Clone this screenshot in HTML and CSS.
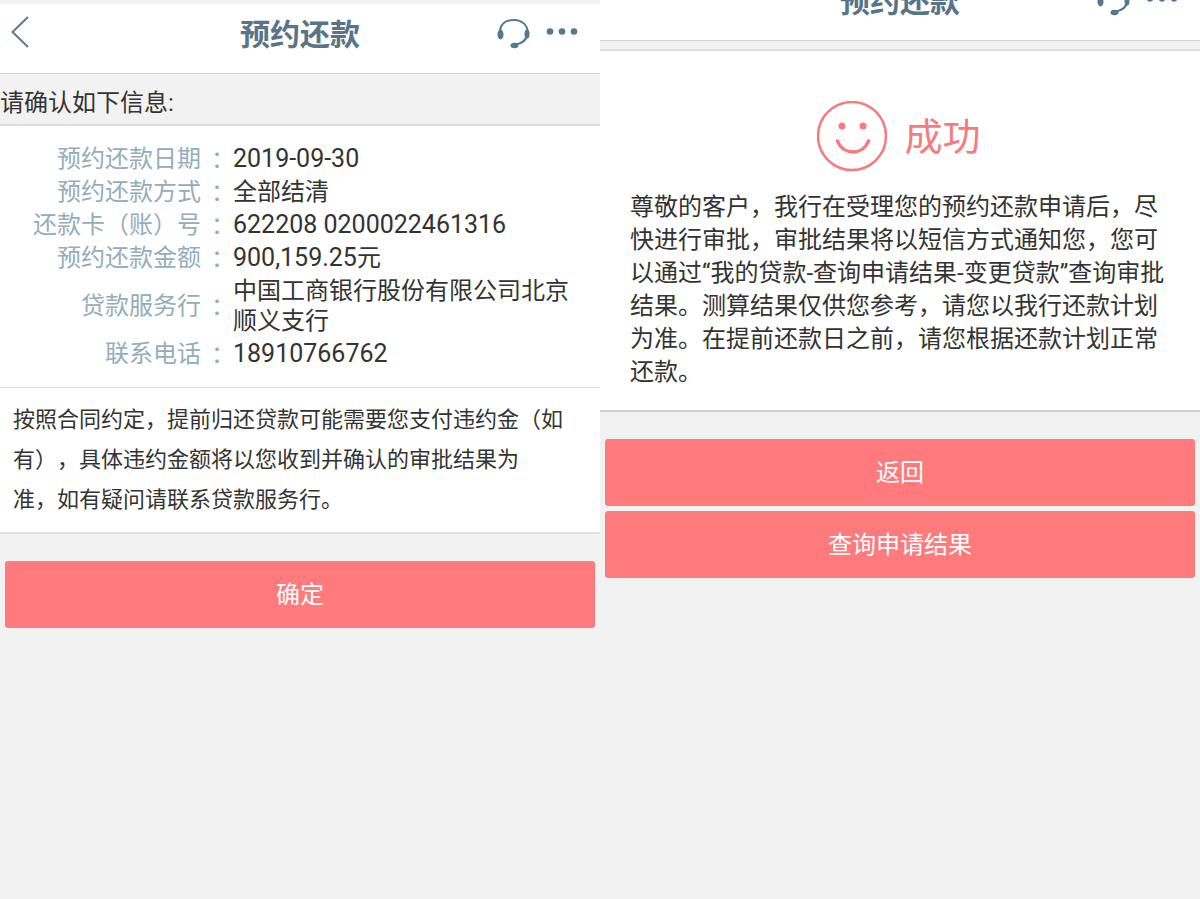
FILE: index.html
```html
<!DOCTYPE html>
<html lang="zh-CN">
<head>
<meta charset="utf-8">
<meta name="viewport" content="width=device-width, initial-scale=1">
<title>预约还款</title>
<link rel="stylesheet" href="styles.css">
</head>
<body>
<div class="screens">
  <section class="screen">
    <header class="bar">
      <button class="icon-btn" type="button" aria-label="后退">
        <svg width="40" height="40" viewBox="0 0 40 40"><path d="M28 2 12.500 17 28 32" fill="none" stroke="#5b7b8e" stroke-width="2"/></svg>
      </button>
      <h1 class="title">预约还款</h1>
      <div class="actions">
        <button class="icon-btn" type="button" aria-label="客服">
          <svg width="36" height="34" viewBox="0 0 36 34"><path d="M4.500 16C2.500 7 9 2 17.500 2s15 5 14 14c-1 6-5 9.500-12 10.500" fill="none" stroke="#55788d" stroke-width="2"/><ellipse cx="4.500" cy="16.500" rx="3" ry="5" fill="#55788d"/><ellipse cx="31" cy="16" rx="2.500" ry="4.500" fill="#55788d"/><ellipse cx="18.500" cy="27.500" rx="4" ry="2.700" fill="#55788d"/></svg>
        </button>
        <button class="icon-btn" type="button" aria-label="更多">
          <svg width="34" height="34" viewBox="0 0 34 34" fill="#55788d"><circle cx="4" cy="13.500" r="3.300"/><circle cx="16" cy="13.500" r="3.300"/><circle cx="28" cy="13.500" r="3.300"/></svg>
        </button>
      </div>
    </header>
    <p class="prompt">请确认如下信息:</p>
    <dl class="details">
      <dt>预约还款日期</dt><dd class="colon">：</dd><dd class="num">2019-09-30</dd>
      <dt>预约还款方式</dt><dd class="colon">：</dd><dd>全部结清</dd>
      <dt>还款卡（账）号</dt><dd class="colon">：</dd><dd class="num">622208 0200022461316</dd>
      <dt>预约还款金额</dt><dd class="colon">：</dd><dd><span class="num">900,159.25</span>元</dd>
      <dt>贷款服务行</dt><dd class="colon">：</dd><dd>中国工商银行股份有限公司北京顺义支行</dd>
      <dt>联系电话</dt><dd class="colon">：</dd><dd class="num">18910766762</dd>
    </dl>
    <p class="notice">按照合同约定，提前归还贷款可能需要您支付违约金（如<br>有），具体违约金额将以您收到并确认的审批结果为<br>准，如有疑问请联系贷款服务行。</p>
    <div class="buttons"><button class="primary" type="button">确定</button></div>
  </section>

  <section class="screen">
    <header class="bar scrolled">
      <span></span>
      <h1 class="title">预约还款</h1>
      <div class="actions">
        <button class="icon-btn" type="button" aria-label="客服">
          <svg width="36" height="34" viewBox="0 0 36 34"><path d="M4.500 16C2.500 7 9 2 17.500 2s15 5 14 14c-1 6-5 9.500-12 10.500" fill="none" stroke="#55788d" stroke-width="2"/><ellipse cx="4.500" cy="16.500" rx="3" ry="5" fill="#55788d"/><ellipse cx="31" cy="16" rx="2.500" ry="4.500" fill="#55788d"/><ellipse cx="18.500" cy="27.500" rx="4" ry="2.700" fill="#55788d"/></svg>
        </button>
        <button class="icon-btn" type="button" aria-label="更多">
          <svg width="34" height="34" viewBox="0 0 34 34" fill="#55788d"><circle cx="4" cy="13.500" r="3.300"/><circle cx="16" cy="13.500" r="3.300"/><circle cx="28" cy="13.500" r="3.300"/></svg>
        </button>
      </div>
    </header>
    <div class="result">
      <h2 class="status">
        <svg width="72" height="72" viewBox="0 0 72 72" fill="none" stroke="#f9797c"><circle cx="35" cy="35" r="34" stroke-width="2.500"/><path d="M20.500 40C26 54.500 46 54.500 51.500 40" stroke-width="3.500" stroke-linecap="round"/><g fill="#f9797c" stroke="none"><circle cx="25" cy="25" r="3.500"/><circle cx="46" cy="25" r="3.500"/></g></svg>
        成功
      </h2>
      <p class="message">尊敬的客户，我行在受理您的预约还款申请后，尽<br>快进行审批，审批结果将以短信方式通知您，您可<br>以通过“我的贷款-查询申请结果-变更贷款”查询审批<br>结果。测算结果仅供您参考，请您以我行还款计划<br>为准。在提前还款日之前，请您根据还款计划正常<br>还款。</p>
    </div>
    <div class="buttons">
      <button class="primary" type="button">返回</button>
      <button class="primary" type="button">查询申请结果</button>
    </div>
  </section>
</div>
</body>
</html>
```
FILE: styles.css
```css
* { box-sizing: border-box; }
body {
  margin: 0;
  background: #f2f2f2;
  color: #333;
  font: 24px/30px Roboto, "Noto Sans CJK SC", sans-serif;
  text-spacing-trim: space-all;
}
h1, h2, p, dl, dd { margin: 0; }
button { font: inherit; }
.screens {
  display: grid;
  grid-template-columns: 1fr 1fr;
  min-height: 100vh;
}
.screen { overflow: hidden; }
.bar {
  display: grid;
  grid-template-columns: 1fr auto 1fr;
  align-items: center;
  height: 74px;
  padding-bottom: 8px;
  border-top: 4px solid #f2f2f2;
  border-bottom: 1px solid #d2d2d2;
  background: #fff;
  color: #587486;
}
.scrolled { margin-top: -33px; }
.title { font-size: 30px; line-height: 40px; font-weight: 700; }
.actions {
  display: flex;
  gap: 14px;
  justify-content: flex-end;
  padding-right: 20px;
}
.icon-btn {
  padding: 0;
  border: 0;
  background: none;
  justify-self: start;
}
.icon-btn svg { display: block; }
.prompt {
  padding: 14px 0 6px;
  border-bottom: 2px solid #dedede;
}
.details {
  display: grid;
  grid-template-columns: 201px 32px 1fr;
  row-gap: 3px;
  align-items: center;
  padding: 18px 30px 18px 0;
  background: #fff;
}
.details dt { color: #93adbb; text-align: right; }
.colon {
  color: #93adbb;
  font-family: "Noto Sans CJK TC", sans-serif;
  text-align: center;
}
.num { font-size: 25px; }
.notice {
  padding: 12px 13px;
  border-top: 1px solid #dedede;
  border-bottom: 2px solid #dedede;
  background: #fff;
  font-size: 22px;
  line-height: 40px;
}
.buttons {
  display: grid;
  gap: 5px;
  padding: 27px 5px;
}
.primary {
  height: 67px;
  padding: 0;
  border: 0;
  border-radius: 3px;
  background: #ff7a7c;
  color: #fff;
}
.result {
  margin-top: 8px;
  padding: 50px 30px 21px;
  border-top: 2px solid #dedede;
  border-bottom: 2px solid #d2d2d2;
  background: #fff;
}
.status {
  display: flex;
  gap: 15px;
  align-items: center;
  justify-content: center;
  padding-right: 2px;
  color: #f9797c;
  font-size: 38px;
  font-weight: 400;
}
.message {
  margin-top: 18px;
  line-height: 33px;
  white-space: nowrap;
}
```
